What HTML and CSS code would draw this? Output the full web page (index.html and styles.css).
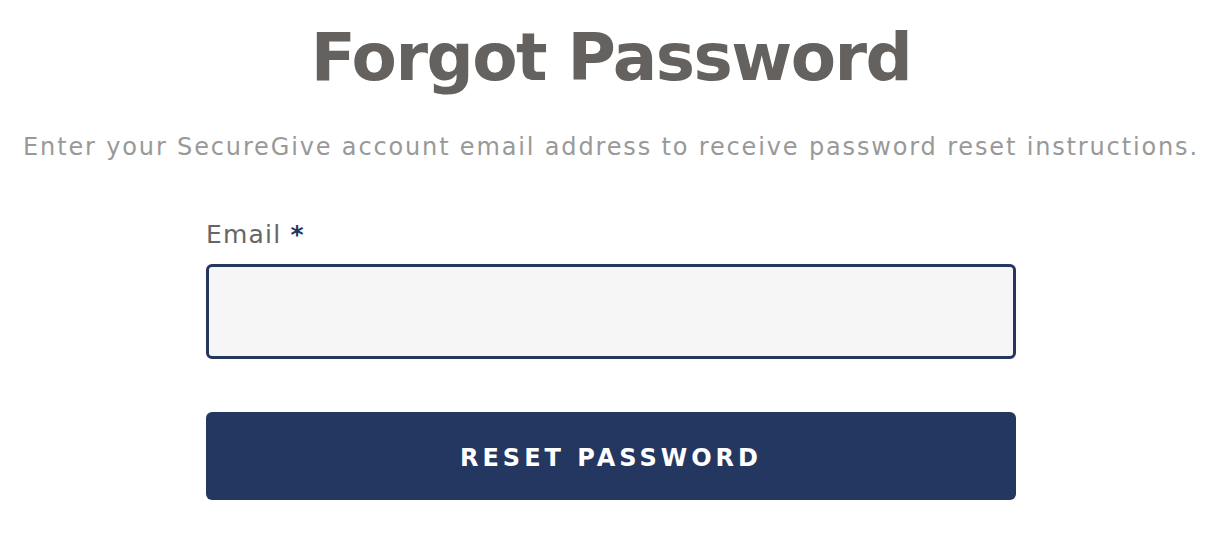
FILE: index.html
```html
<!DOCTYPE html>
<html lang="en">
<head>
  <meta charset="UTF-8">
  <title>Forgot Password</title>
  <link rel="stylesheet" href="styles.css">
</head>
<body>

<div class="page">
  <h1 class="title">Forgot Password</h1>
  <p class="intro">Enter your SecureGive account email address to receive password reset instructions.</p>

  <form class="reset-form">
    <label class="field-label" for="email">Email <span class="req">*</span></label>
    <input type="email" id="email" class="field-input">
    <button type="button" class="submit-btn">Reset Password</button>
  </form>
</div>

</body>
</html>
```

FILE: styles.css
```css
* {
  box-sizing: border-box;
}

body {
  margin: 0;
  background: #fff;
  font-family: "DejaVu Sans", "Noto Sans", sans-serif;
}

.page {
  display: flex;
  flex-direction: column;
  align-items: center;
  padding: 18px 0 0 4px;
}

.title {
  margin: 0;
  font-size: 66px;
  line-height: 80px;
  font-weight: 700;
  color: #65615e;
  letter-spacing: -1.5px;
}

.intro {
  margin: 34px 0 0;
  font-size: 24px;
  line-height: 30px;
  color: #999;
  letter-spacing: 1.85px;
  white-space: nowrap;
}

.reset-form {
  width: 810px;
  margin-top: 58px;
  display: flex;
  flex-direction: column;
}

.field-label {
  font-size: 25px;
  line-height: 30px;
  color: #666;
  letter-spacing: 1.2px;
}

.req {
  color: #243560;
  font-weight: 700;
}

.field-input {
  margin-top: 14px;
  height: 95px;
  border: 3px solid #25365f;
  border-radius: 6px;
  background: #f6f6f6;
  font-size: 20px;
  padding: 0 16px;
}

.submit-btn {
  margin-top: 53px;
  height: 88px;
  padding-top: 5px;
  border: 0;
  border-radius: 6px;
  background: #243761;
  color: #fff;
  font-family: inherit;
  font-size: 24px;
  font-weight: 700;
  letter-spacing: 4px;
  text-transform: uppercase;
  cursor: pointer;
}
```
